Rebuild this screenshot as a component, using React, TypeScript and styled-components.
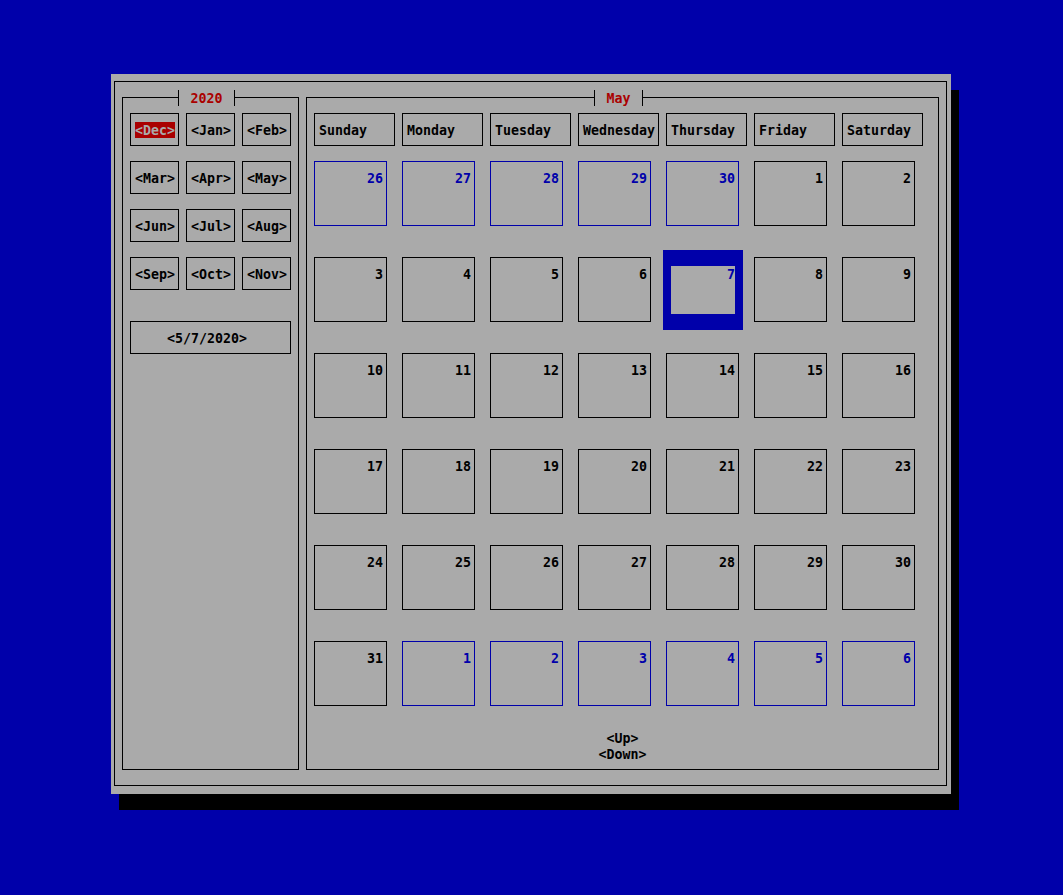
import React from "react";
import styled, { createGlobalStyle, css } from "styled-components";

const BLUE = "#0000aa";
const GRAY = "#aaaaaa";
const RED = "#aa0000";
const BLACK = "#000000";

const Global = createGlobalStyle`
  html, body {
    margin: 0;
    padding: 0;
    background: ${BLUE};
  }
  body {
    font-family: "DejaVu Sans Mono", "Liberation Mono", monospace;
    font-weight: bold;
    font-size: 13.29px;
    line-height: 16px;
    color: ${BLACK};
  }
`;

const Screen = styled.div`
  padding: 74px 0 0 111px;
  min-height: 821px;
`;

const Window = styled.div`
  width: 840px;
  height: 720px;
  box-sizing: border-box;
  background: ${GRAY};
  box-shadow: 8px 16px 0 0 ${BLACK};
  padding: 7px 4px 8px 3px;
`;

const Frame = styled.div`
  box-sizing: border-box;
  width: 833px;
  height: 705px;
  border: 1px solid ${BLACK};
  padding: 15px 7px;
  display: flex;
  gap: 7px;
`;

const Panel = styled.section<{ $width: number }>`
  position: relative;
  box-sizing: border-box;
  width: ${(p) => p.$width}px;
  height: 673px;
  border: 1px solid ${BLACK};
  padding: 15px 7px 7px;
  display: flex;
  flex-direction: column;
`;

const TitleTab = styled.div<{ $left: number; $width: number }>`
  position: absolute;
  top: -8px;
  left: ${(p) => p.$left}px;
  width: ${(p) => p.$width}px;
  height: 16px;
  box-sizing: border-box;
  border-left: 1px solid ${BLACK};
  border-right: 1px solid ${BLACK};
  background: ${GRAY};
  color: ${RED};
  display: flex;
  justify-content: center;
  line-height: 18px;
`;

const MonthGrid = styled.div`
  display: grid;
  grid-template-columns: repeat(3, 49px);
  column-gap: 7px;
  row-gap: 15px;
`;

const BoxButton = styled.div`
  box-sizing: border-box;
  height: 33px;
  border: 1px solid ${BLACK};
  padding: 8px 0 0 4px;
  line-height: 18px;
  white-space: pre;
`;

const MonthButton = styled(BoxButton)``;

const Highlight = styled.span<{ $on: boolean }>`
  display: inline-block;
  vertical-align: top;
  height: 16px;
  line-height: 18px;
  ${(p) =>
    p.$on &&
    css`
      background: ${RED};
      color: ${GRAY};
    `}
`;

const DateButton = styled(BoxButton)`
  width: 161px;
  margin-top: 31px;
  padding-left: 36px;
`;

const HeaderRow = styled.div`
  display: grid;
  grid-template-columns: repeat(7, 81px);
  column-gap: 7px;
`;

const HeaderBox = styled(BoxButton)``;

const DaysGrid = styled.div`
  margin-top: 15px;
  display: grid;
  grid-template-columns: repeat(7, 73px);
  column-gap: 15px;
  row-gap: 31px;
`;

const DayBox = styled.div<{ $other: boolean; $selected: boolean }>`
  position: relative;
  isolation: isolate;
  box-sizing: border-box;
  height: 65px;
  border: 1px solid ${(p) => (p.$selected ? GRAY : p.$other ? BLUE : BLACK)};
  color: ${(p) => (p.$other || p.$selected ? BLUE : BLACK)};
  background: ${(p) => (p.$selected ? BLUE : "transparent")};
  display: flex;
  ${(p) =>
    p.$selected &&
    css`
      &::before {
        content: "";
        position: absolute;
        top: -8px;
        right: -5px;
        bottom: -9px;
        left: -4px;
        background: ${BLUE};
        z-index: -1;
      }
    `}
`;

const DayInner = styled.div<{ $selected: boolean }>`
  flex: 1;
  margin: 8px 3px 7px 4px;
  background: ${(p) => (p.$selected ? GRAY : "transparent")};
  text-align: right;
  line-height: 18px;
`;

const Nav = styled.div`
  margin-top: 24px;
  display: flex;
  flex-direction: column;
  align-items: center;
`;

const NavItem = styled.span`
  display: block;
  height: 16px;
  line-height: 18px;
`;

const months = [
  "Dec", "Jan", "Feb",
  "Mar", "Apr", "May",
  "Jun", "Jul", "Aug",
  "Sep", "Oct", "Nov",
];

const weekdays = [
  "Sunday", "Monday", "Tuesday", "Wednesday", "Thursday", "Friday", "Saturday",
];

type Day = { n: number; other: boolean };

const buildDays = (): Day[] => {
  const days: Day[] = [];
  for (let n = 26; n <= 30; n++) days.push({ n, other: true });
  for (let n = 1; n <= 31; n++) days.push({ n, other: false });
  for (let n = 1; n <= 6; n++) days.push({ n, other: true });
  return days;
};

export default function App() {
  const days = buildDays();
  return (
    <>
      <Global />
      <Screen>
        <Window>
          <Frame>
            <Panel $width={177}>
              <TitleTab $left={55} $width={57}>2020</TitleTab>
              <MonthGrid>
                {months.map((m) => (
                  <MonthButton key={m}>
                    <Highlight $on={m === "Dec"}>{`<${m}>`}</Highlight>
                  </MonthButton>
                ))}
              </MonthGrid>
              <DateButton>{"<5/7/2020>"}</DateButton>
            </Panel>
            <Panel $width={633}>
              <TitleTab $left={287} $width={49}>May</TitleTab>
              <HeaderRow>
                {weekdays.map((w) => (
                  <HeaderBox key={w}>{w}</HeaderBox>
                ))}
              </HeaderRow>
              <DaysGrid>
                {days.map((d, i) => {
                  const selected = !d.other && d.n === 7;
                  return (
                    <DayBox key={i} $other={d.other} $selected={selected}>
                      <DayInner $selected={selected}>{d.n}</DayInner>
                    </DayBox>
                  );
                })}
              </DaysGrid>
              <Nav>
                <NavItem>{"<Up>"}</NavItem>
                <NavItem>{"<Down>"}</NavItem>
              </Nav>
            </Panel>
          </Frame>
        </Window>
      </Screen>
    </>
  );
}
